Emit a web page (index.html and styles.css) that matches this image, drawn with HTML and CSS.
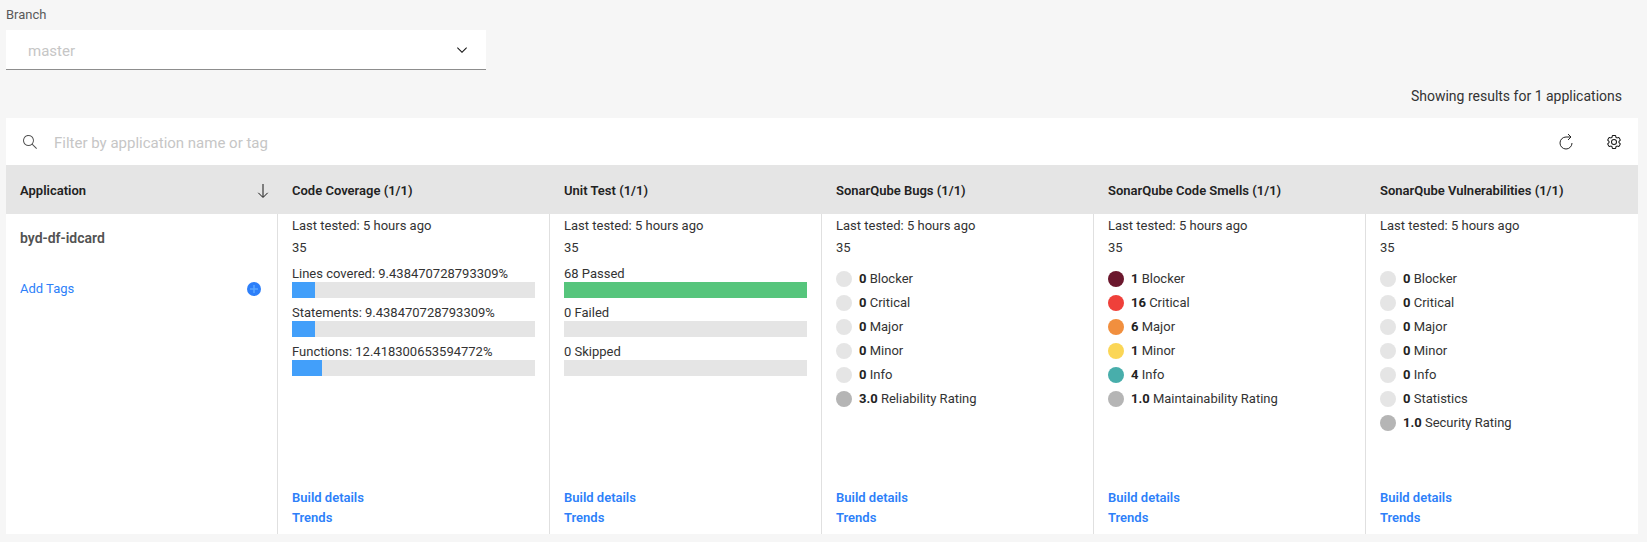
FILE: index.html
```
<!DOCTYPE html>
<html lang="en">
<head>
<meta charset="utf-8">
<title>Applications</title>
<link rel="stylesheet" href="styles.css">
</head>
<body>
<main class="page">
  <div class="branch">
    <label class="branch-label" for="branch">Branch</label>
    <div class="select-wrap">
      <select class="branch-select" id="branch"><option>master</option></select>
      <svg class="chevron" width="16" height="16" viewBox="0 0 16 16" aria-hidden="true"><path d="M8 11L3 6l.7-.7L8 9.6l4.3-4.3.7.7z" fill="#161616"/></svg>
    </div>
  </div>
  <p class="summary">Showing results for 1 applications</p>
  <section class="panel">
    <div class="toolbar">
      <svg width="16" height="16" viewBox="0 0 16 16" aria-hidden="true"><path d="M15 14.3L10.7 10c1.9-2.3 1.6-5.8-.7-7.7S4.2.7 2.3 3 .7 8.8 3 10.7c2 1.7 5 1.7 7 0l4.3 4.3.7-.7zM2 6.500C2 4 4 2 6.500 2S11 4 11 6.500 9 11 6.500 11 2 9 2 6.500z" fill="#525252"/></svg>
      <input class="filter" type="text" aria-label="Filter applications" placeholder="Filter by application name or tag">
      <button class="icon-button" type="button" aria-label="Refresh"><svg width="16" height="16" viewBox="0 0 32 32"><path d="M28 18A12 12 0 1 1 16 6H25" fill="none" stroke="#262626" stroke-width="2"/><path d="M20 0l6 6-6 6" fill="none" stroke="#262626" stroke-width="2"/></svg></button>
      <button class="icon-button" type="button" aria-label="Settings"><svg width="16" height="16" viewBox="0 0 32 32" fill="#161616"><path d="M27 16.760V15.240l1.920-1.680A2 2 0 0 0 29.300 11L26.940 7a2 2 0 0 0-1.730-1 2 2 0 0 0-.64.100l-2.430.820a11.350 11.350 0 0 0-1.310-.75l-.51-2.520a2 2 0 0 0-2-1.610H13.640a2 2 0 0 0-2 1.610l-.51 2.520a11.480 11.480 0 0 0-1.320.75L7.430 6.060A2 2 0 0 0 6.790 6a2 2 0 0 0-1.730 1L2.700 11a2 2 0 0 0 .41 2.510L5 15.240v1.530l-1.890 1.680A2 2 0 0 0 2.700 21l2.360 4a2 2 0 0 0 1.730 1 2 2 0 0 0 .64-.1l2.430-.82a11.350 11.350 0 0 0 1.310.75l.51 2.520a2 2 0 0 0 2 1.610h4.720a2 2 0 0 0 2-1.610l.51-2.520a11.480 11.480 0 0 0 1.320-.75l2.420.82a2 2 0 0 0 .64.100 2 2 0 0 0 1.730-1L29.300 21a2 2 0 0 0-.41-2.510ZM25.210 24l-3.430-1.160a8.860 8.860 0 0 1-2.710 1.570L18.360 28H13.640l-.71-3.550a9.360 9.360 0 0 1-2.700-1.570L6.790 24l-2.360-4 2.720-2.400a8.900 8.900 0 0 1 0-3.130L4.430 12l2.360-4 3.430 1.160a8.860 8.860 0 0 1 2.710-1.570L13.640 4h4.720l.71 3.550a9.360 9.360 0 0 1 2.700 1.570L25.210 8l2.360 4-2.720 2.400a8.900 8.900 0 0 1 0 3.130L27.570 20Z"/><path d="M16 22a6 6 0 1 1 6-6 6 6 0 0 1-6 6Zm0-10a4 4 0 1 0 4 4 4 4 0 0 0-4-4Z"/></svg></button>
    </div>
    <table class="grid">
      <thead>
        <tr>
          <th scope="col"><span class="sort">Application <svg width="16" height="16" viewBox="0 0 16 16" aria-hidden="true"><path d="M8 1v13M3.300 9.800L8 14.500l4.700-4.700" fill="none" stroke="#161616"/></svg></span></th>
          <th scope="col">Code Coverage (1/1)</th>
          <th scope="col">Unit Test (1/1)</th>
          <th scope="col">SonarQube Bugs (1/1)</th>
          <th scope="col">SonarQube Code Smells (1/1)</th>
          <th scope="col">SonarQube Vulnerabilities (1/1)</th>
        </tr>
      </thead>
      <tbody>
        <tr>
          <td>
            <div class="app">
              <strong class="app-name">byd-df-idcard</strong>
              <button class="add-tags" type="button">Add Tags <svg width="14" height="14" viewBox="0 0 14 14" aria-hidden="true"><circle cx="7" cy="7" r="7" fill="#2d7ff9"/><path d="M7 3v8M3 7h8" stroke="#5aa7ff" stroke-width="1.500"/></svg></button>
            </div>
          </td>
          <td>
            <div class="cell">
              <p class="tested">Last tested: 5 hours ago</p><p class="build">35</p>
              <div class="bars">
                <div><p>Lines covered: 9.438470728793309%</p><div class="track"><div class="fill" style="width:9.438%"></div></div></div>
                <div><p>Statements: 9.438470728793309%</p><div class="track"><div class="fill" style="width:9.438%"></div></div></div>
                <div><p>Functions: 12.418300653594772%</p><div class="track"><div class="fill" style="width:12.418%"></div></div></div>
              </div>
              <div class="links"><a href="#">Build details</a><a href="#">Trends</a></div>
            </div>
          </td>
          <td>
            <div class="cell">
              <p class="tested">Last tested: 5 hours ago</p><p class="build">35</p>
              <div class="bars">
                <div><p>68 Passed</p><div class="track"><div class="fill passed" style="width:100%"></div></div></div>
                <div><p>0 Failed</p><div class="track"></div></div>
                <div><p>0 Skipped</p><div class="track"></div></div>
              </div>
              <div class="links"><a href="#">Build details</a><a href="#">Trends</a></div>
            </div>
          </td>
          <td>
            <div class="cell">
              <p class="tested">Last tested: 5 hours ago</p><p class="build">35</p>
              <ul class="counts">
                <li><i class="dot"></i><span><b>0</b> Blocker</span></li>
                <li><i class="dot"></i><span><b>0</b> Critical</span></li>
                <li><i class="dot"></i><span><b>0</b> Major</span></li>
                <li><i class="dot"></i><span><b>0</b> Minor</span></li>
                <li><i class="dot"></i><span><b>0</b> Info</span></li>
                <li><i class="dot rating"></i><span><b>3.0</b> Reliability Rating</span></li>
              </ul>
              <div class="links"><a href="#">Build details</a><a href="#">Trends</a></div>
            </div>
          </td>
          <td>
            <div class="cell">
              <p class="tested">Last tested: 5 hours ago</p><p class="build">35</p>
              <ul class="counts">
                <li><i class="dot blocker"></i><span><b>1</b> Blocker</span></li>
                <li><i class="dot critical"></i><span><b>16</b> Critical</span></li>
                <li><i class="dot major"></i><span><b>6</b> Major</span></li>
                <li><i class="dot minor"></i><span><b>1</b> Minor</span></li>
                <li><i class="dot info"></i><span><b>4</b> Info</span></li>
                <li><i class="dot rating"></i><span><b>1.0</b> Maintainability Rating</span></li>
              </ul>
              <div class="links"><a href="#">Build details</a><a href="#">Trends</a></div>
            </div>
          </td>
          <td>
            <div class="cell">
              <p class="tested">Last tested: 5 hours ago</p><p class="build">35</p>
              <ul class="counts">
                <li><i class="dot"></i><span><b>0</b> Blocker</span></li>
                <li><i class="dot"></i><span><b>0</b> Critical</span></li>
                <li><i class="dot"></i><span><b>0</b> Major</span></li>
                <li><i class="dot"></i><span><b>0</b> Minor</span></li>
                <li><i class="dot"></i><span><b>0</b> Info</span></li>
                <li><i class="dot"></i><span><b>0</b> Statistics</span></li>
                <li><i class="dot rating"></i><span><b>1.0</b> Security Rating</span></li>
              </ul>
              <div class="links"><a href="#">Build details</a><a href="#">Trends</a></div>
            </div>
          </td>
        </tr>
      </tbody>
    </table>
  </section>
</main>
</body>
</html>
```
FILE: styles.css
```
* { box-sizing: border-box; }
body {
  margin: 0;
  background: #f6f6f6;
  color: #333;
  font: 13px/16px Roboto, "Liberation Sans", sans-serif;
}
p, ul { margin: 0; padding: 0; }
ul { list-style: none; }
button, input, select { font: inherit; border: 0; background: none; padding: 0; }
svg { display: block; flex: none; }
.page { padding: 7px 9px 8px 6px; }
.branch { max-width: 480px; }
.branch-label { display: block; margin-bottom: 7px; color: #5a5a5a; }
.select-wrap { display: grid; align-items: center; background: #fff; border-bottom: 1px solid #8d8d8d; }
.branch-select {
  grid-area: 1 / 1;
  width: 100%;
  height: 39px;
  padding: 2px 48px 0 22px;
  appearance: none;
  color: #c6c6c6;
  font-size: 15px;
}
.chevron { grid-area: 1 / 1; justify-self: end; margin-right: 16px; pointer-events: none; }
.summary { padding: 16px 16px 12px; text-align: right; font-size: 14px; line-height: 20px; }
.panel { background: #fff; }
.toolbar { display: flex; align-items: center; height: 47px; padding: 0 16px; }
.filter { flex: 1; min-width: 0; height: 40px; margin-left: 16px; padding-top: 2px; font-size: 15px; }
.filter::placeholder { color: #c6c6c6; opacity: 1; }
.icon-button { margin-left: 32px; }
.grid { width: 100%; table-layout: fixed; border-collapse: separate; border-spacing: 0; }
.grid th { height: 49px; padding: 2px 14px 0; background: #e5e5e5; text-align: left; font-weight: 600; color: #222; }
.grid td { padding: 0; vertical-align: top; border-right: 1px solid #e0e0e0; }
.grid td:last-child { border-right: 0; }
.sort { display: flex; align-items: center; justify-content: space-between; margin-right: -7px; }
.app { display: flex; flex-direction: column; gap: 33px; padding: 14px 16px 0 14px; }
.app-name { font-size: 14px; line-height: 20px; font-weight: 600; color: #525252; }
.add-tags { display: flex; align-items: center; justify-content: space-between; color: #2d7ff9; cursor: pointer; }
.cell { display: flex; flex-direction: column; min-height: 320px; padding: 4px 14px 6px; }
.build { margin-top: 6px; }
.bars { display: grid; gap: 7px; margin-top: 10px; }
.track { height: 16px; background: #e5e5e5; }
.fill { height: 100%; background: #429ffa; }
.passed { background: #56c57c; }
.counts { display: grid; gap: 8px; margin-top: 15px; }
.counts li { display: flex; gap: 7px; }
.counts b { font-weight: 700; color: #222; }
.dot { flex: none; width: 16px; height: 16px; border-radius: 50%; background: #e5e5e5; }
.rating { background: #b5b5b5; }
.blocker { background: #6b172d; }
.critical { background: #ef403a; }
.major { background: #f18f3e; }
.minor { background: #fbd656; }
.info { background: #48aeab; }
.links { display: flex; flex-direction: column; align-items: flex-start; margin-top: auto; line-height: 20px; }
.links a { color: #2d7ff9; font-weight: 600; text-decoration: none; }
```
